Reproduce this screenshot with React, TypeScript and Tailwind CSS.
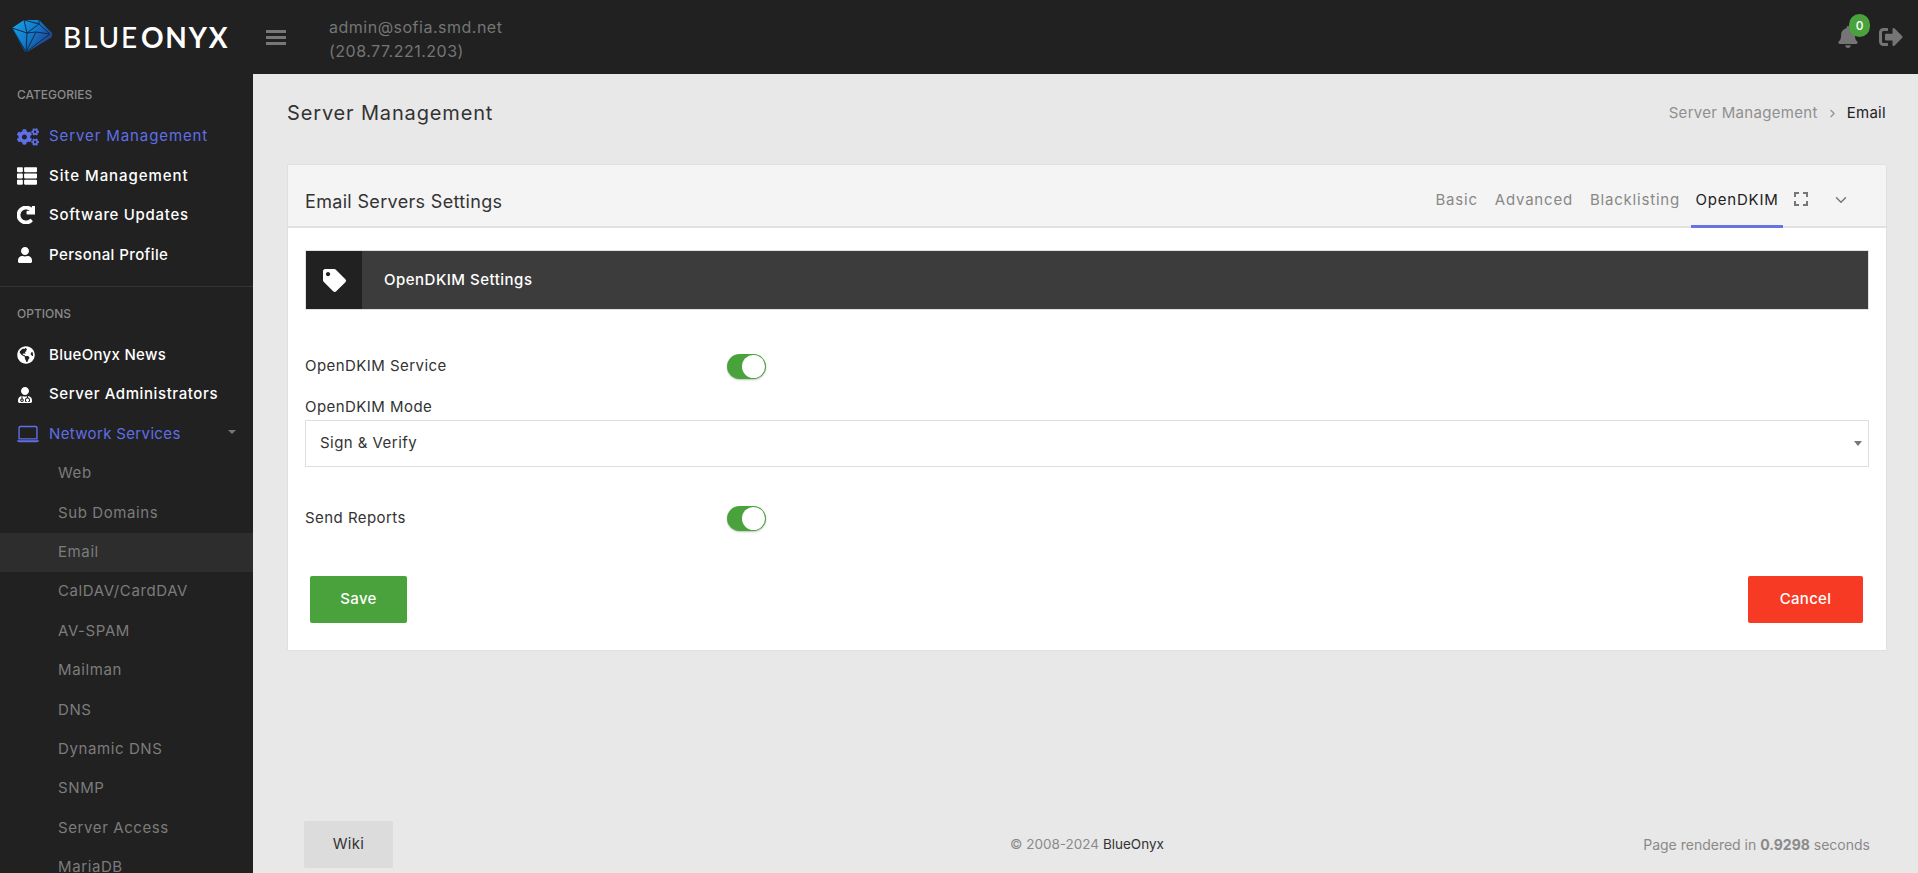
import { FaBell, FaCogs, FaGlobeAmericas, FaRedo, FaSignOutAlt, FaTag, FaThList, FaUser, FaUserMd } from "react-icons/fa";
import { BsLaptop } from "react-icons/bs";
import { FiChevronDown, FiChevronRight } from "react-icons/fi";
import type { ReactNode } from "react";

const font = "font-['Inter','Liberation_Sans',sans-serif]";

function Diamond() {
  return (
    <svg width="42" height="36" viewBox="0 0 42 36" className="shrink-0">
      <defs>
        <linearGradient id="gem" x1="0" y1="0" x2="1" y2="0.6">
          <stop offset="0" stopColor="#19a7e8" />
          <stop offset="0.55" stopColor="#1379c8" />
          <stop offset="1" stopColor="#23408f" />
        </linearGradient>
      </defs>
      <path d="M0 9 L12 1 L27 1 L40 14 L40 18 L15 33 L13 33 Z" fill="url(#gem)" />
      <path d="M0 9 L15 14 L12 1 M15 14 L27 5 L12 1 M27 5 L38 15 L24 13 L15 14 L14 33 M24 13 L14 33 M38 15 L14 33 M0 9 L14 33 M27 1 L27 5" stroke="#0d2b50" strokeWidth="1" fill="none" />
    </svg>
  );
}

function NavItem({ icon, label, track, tone = "white", caret = false }: { icon: ReactNode; label: string; track: string; tone?: "white" | "blue"; caret?: boolean }) {
  return (
    <div className={`flex items-center h-[39.4px] pl-[17px] pr-[17px] text-[15px] ${track} ${tone === "blue" ? "text-[#5f6fe6] font-normal" : "text-white font-medium"}`}>
      <span className="w-[32px] flex items-center shrink-0">{icon}</span>
      <span className="flex-1">{label}</span>
      {caret && <span className="w-0 h-0 border-x-[4px] border-x-transparent border-t-[4px] border-t-[#777] mb-1" />}
    </div>
  );
}

function SubItem({ label, active = false }: { label: string; active?: boolean }) {
  return (
    <div className={`flex items-center h-[39.4px] pl-[58px] text-[15px] tracking-[0.6px] text-[#7c7c7c] ${active ? "bg-[#2d2d2d]" : ""}`}>{label}</div>
  );
}

function Toggle() {
  return (
    <div className="w-[39px] h-[25px] rounded-full bg-[#4aa23c] p-px flex justify-end shadow-[0_1px_2px_rgba(0,0,0,0.25)]">
      <div className="w-[23px] h-[23px] rounded-full bg-white" />
    </div>
  );
}

function Tab({ label, active = false }: { label: string; active?: boolean }) {
  return (
    <div className={`h-full flex items-center justify-center px-[6px] pb-[5px] border-b-[3px] text-[15px] tracking-[0.8px] ${active ? "w-[92px] border-[#6673e0] text-[#222]" : "border-transparent text-[#888]"}`}>{label}</div>
  );
}

export default function App() {
  return (
    <div className={`${font} h-[873px] w-full overflow-hidden flex flex-col bg-[#e8e8e8]`}>
      <header className="h-[74px] shrink-0 bg-[#212121] flex items-center pl-[12px] pr-[15px]">
        <Diamond />
        <span className="ml-[9px] w-[201px] text-[28px] leading-none tracking-[1.8px] text-white font-['Lato',sans-serif]">
          <span className="font-medium">BLUE</span>
          <span className="font-bold ml-[2px]">ONYX</span>
        </span>
        <div className="flex flex-col gap-[3px] w-[20px] ml-[2px]">
          <div className="h-[3px] bg-[#777]" />
          <div className="h-[3px] bg-[#777]" />
          <div className="h-[3px] bg-[#777]" />
        </div>
        <div className="ml-[43px] mt-[4px] text-[16px] leading-[24px] tracking-[0.5px] text-[#757575]">
          <div>admin@sofia.smd.net</div>
          <div>(208.77.221.203)</div>
        </div>
        <div className="ml-auto flex items-center gap-[20px]">
          <div className="relative">
            <FaBell size={22} className="text-[#757575]" />
            <span className="absolute -top-[12px] left-[12px] w-[21px] h-[23px] rounded-full bg-[#4aa23c] text-white text-[12px] font-medium flex items-center justify-center">0</span>
          </div>
          <FaSignOutAlt size={24} className="text-[#757575]" />
        </div>
      </header>

      <div className="flex-1 flex min-h-0">
        <aside className="w-[253px] shrink-0 bg-[#212121] overflow-hidden">
          <div className="pt-[12px] pl-[17px] h-[43px] text-[12px] font-medium text-[#8a8a8a]">CATEGORIES</div>
          <NavItem tone="blue" track="tracking-[0.9px]" icon={<FaCogs size={22} />} label="Server Management" />
          <NavItem track="tracking-[0.95px]" icon={<FaThList size={20} />} label="Site Management" />
          <NavItem track="tracking-[0.7px]" icon={<FaRedo size={18} stroke="currentColor" strokeWidth={36} />} label="Software Updates" />
          <NavItem track="tracking-[0.4px]" icon={<FaUser size={16} />} label="Personal Profile" />
          <div className="mt-[11px] border-t border-[#333]" />
          <div className="pt-[18px] pl-[17px] h-[49px] text-[12px] font-medium text-[#8a8a8a]">OPTIONS</div>
          <NavItem track="tracking-[0.3px]" icon={<FaGlobeAmericas size={18} />} label="BlueOnyx News" />
          <NavItem track="tracking-[0.6px]" icon={<FaUserMd size={16} />} label="Server Administrators" />
          <NavItem tone="blue" track="tracking-[0.35px]" caret icon={<BsLaptop size={22} />} label="Network Services" />
          <SubItem label="Web" />
          <SubItem label="Sub Domains" />
          <SubItem label="Email" active />
          <SubItem label="CalDAV/CardDAV" />
          <SubItem label="AV-SPAM" />
          <SubItem label="Mailman" />
          <SubItem label="DNS" />
          <SubItem label="Dynamic DNS" />
          <SubItem label="SNMP" />
          <SubItem label="Server Access" />
          <SubItem label="MariaDB" />
        </aside>

        <main className="flex-1 min-w-0 flex flex-col pl-[34px] pr-[32px]">
          <div className="h-[91px] shrink-0 flex items-start justify-between pt-[25px]">
            <h1 className="text-[20px] leading-[28px] tracking-[0.85px] text-[#333]">Server Management</h1>
            <div className="flex items-center h-[28px] text-[15px] tracking-[0.3px] text-[#8f8f8f]">
              <span>Server Management</span>
              <FiChevronRight size={13} className="mx-[8px]" />
              <span className="text-[#222]">Email</span>
            </div>
          </div>

          <section className="bg-white shadow-[0_0_1px_rgba(0,0,0,0.2)] ml-[1px]">
            <div className="h-[63px] bg-[#f4f4f4] border-b-2 border-[#e2e2e2] flex items-end pl-[17px] pr-[36px]">
              <h2 className="text-[18px] tracking-[0.33px] text-[#333] mb-[11px] flex-1">Email Servers Settings</h2>
              <div className="h-[48px] -mb-[2px] flex items-stretch gap-[5px]">
                <Tab label="Basic" />
                <Tab label="Advanced" />
                <Tab label="Blacklisting" />
                <Tab label="OpenDKIM" active />
              </div>
              <div className="h-full flex items-center pt-[6px] gap-[24px] pl-[11px] text-[#777]">
                <svg width="14" height="14" viewBox="0 0 14 14" fill="none" stroke="currentColor" strokeWidth="2">
                  <path d="M1 5V1H5M9 1H13V5M13 9V13H9M5 13H1V9" />
                </svg>
                <FiChevronDown size={18} className="mt-[2px]" />
              </div>
            </div>

            <div className="px-[17px] pt-[22px] pb-[27px]">
              <div className="h-[60px] bg-[#3c3c3c] border border-[#e0e0e0] flex items-center">
                <div className="w-[56px] h-full bg-[#212121] flex items-center justify-center">
                  <FaTag size={23} className="text-white" />
                </div>
                <span className="ml-[22px] text-[15px] font-medium tracking-[0.5px] text-white">OpenDKIM Settings</span>
              </div>

              <div className="mt-[43px] h-[26px] flex items-center">
                <label className="w-[422px] text-[15px] tracking-[0.45px] text-[#333]">OpenDKIM Service</label>
                <Toggle />
              </div>
              <label className="block mt-[18px] text-[15px] leading-[20px] tracking-[0.45px] text-[#333]">OpenDKIM Mode</label>
              <div className="mt-[3px] h-[47px] border border-[#dedede] flex items-center justify-between pl-[14px] pr-[6px] text-[15px] tracking-[0.45px] text-[#333]">
                <span>Sign &amp; Verify</span>
                <span className="w-0 h-0 border-x-[4px] border-x-transparent border-t-[5px] border-t-[#777]" />
              </div>
              <div className="mt-[38px] h-[26px] flex items-center">
                <label className="w-[422px] text-[15px] tracking-[0.45px] text-[#333]">Send Reports</label>
                <Toggle />
              </div>
              <div className="mt-[45px] flex justify-between pl-[5px] pr-[6px]">
                <button className="w-[97px] h-[47px] rounded-[2px] bg-[#4aa23c] text-white text-[15px] font-medium tracking-[0.3px]">Save</button>
                <button className="w-[115px] h-[47px] rounded-[2px] bg-[#f63a24] text-white text-[15px] font-medium tracking-[0.3px]">Cancel</button>
              </div>
            </div>
          </section>

          <footer className="mt-auto mb-[5px] pl-[17px] pr-[16px] grid grid-cols-3 items-center text-[14px] text-[#8a8a8a]">
            <div>
              <div className="w-[89px] h-[47px] rounded-[2px] bg-[#dcdcdc] flex items-center justify-center text-[15px] tracking-[0.3px] text-[#333]">Wiki</div>
            </div>
            <div className="text-center text-[13.5px]">© 2008-2024 <span className="text-[#333]">BlueOnyx</span></div>
            <div className="text-right">Page rendered in <b>0.9298</b> seconds</div>
          </footer>
        </main>
      </div>
    </div>
  );
}
